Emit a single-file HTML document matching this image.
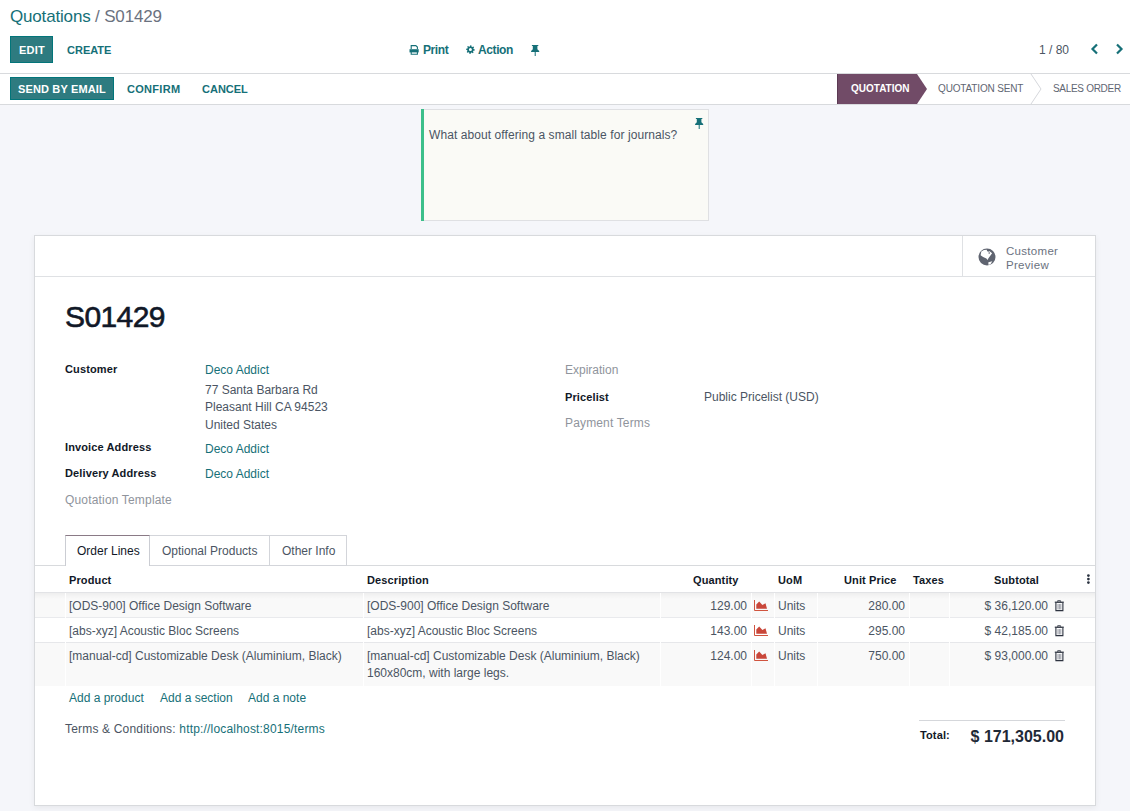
<!DOCTYPE html>
<html><head><meta charset="utf-8"><style>
html,body{margin:0;padding:0;width:1130px;height:811px;overflow:hidden;font-family:"Liberation Sans",sans-serif}
.t{position:absolute;white-space:nowrap}
.r{position:absolute}
</style></head><body>
<div class="r" style="left:0px;top:0px;width:1130px;height:811px;background:#f5f6fa"></div>
<div class="r" style="left:0px;top:0px;width:1130px;height:73px;background:#fff"></div>
<div class="r" style="left:0px;top:73px;width:1130px;height:1px;background:#d8dadd"></div>
<div class="r" style="left:0px;top:74px;width:1130px;height:30px;background:#fff"></div>
<div class="r" style="left:0px;top:104px;width:1130px;height:1px;background:#d8dadd"></div>
<div class="t" style="top:7px;font-size:17px;line-height:19px;color:#4b5563;letter-spacing:-0.17px;left:10px;"><span style="color:#167078">Quotations</span> <span style="color:#6b7280">/ S01429</span></div>
<div class="r" style="left:10px;top:36px;width:43px;height:27px;background:#2e7b80;box-shadow:inset 0 0 0 1px #02757a"></div>
<div class="t" style="top:44px;font-size:11px;line-height:12px;color:#fff;font-weight:700;letter-spacing:0.2px;left:19px;">EDIT</div>
<div class="t" style="top:44px;font-size:11px;line-height:12px;color:#167078;font-weight:700;left:67px;">CREATE</div>
<svg class="r" style="left:409px;top:45px" width="11" height="10" viewBox="0 0 11 10"><path d="M2.2 4V0.6h4.6l1.6 1.5V4" fill="none" stroke="#167078" stroke-width="1.1"/><path d="M0.5 4.2h9.2v3.2H0.5z" fill="#167078"/><path d="M2.2 6.5v2.8h6.2V6.5" fill="none" stroke="#167078" stroke-width="1.1"/></svg>
<div class="t" style="top:43px;font-size:12px;line-height:14px;color:#167078;font-weight:700;letter-spacing:-0.4px;left:423px;">Print</div>
<svg class="r" style="left:466px;top:45px" width="10" height="10" viewBox="0 0 10 10"><path d="M4.40,0.20 L5.26,0.28 L5.62,1.64 L6.18,1.94 L7.51,1.49 L8.06,2.16 L7.36,3.38 L7.54,3.98 L8.80,4.60 L8.72,5.46 L7.36,5.82 L7.06,6.38 L7.51,7.71 L6.84,8.26 L5.62,7.56 L5.02,7.74 L4.40,9.00 L3.54,8.92 L3.18,7.56 L2.62,7.26 L1.29,7.71 L0.74,7.04 L1.44,5.82 L1.26,5.22 L0.00,4.60 L0.08,3.74 L1.44,3.38 L1.74,2.82 L1.29,1.49 L1.96,0.94 L3.18,1.64 L3.78,1.46Z M5.9,4.6 A1.5 1.5 0 1 0 2.9000000000000004,4.6 A1.5 1.5 0 1 0 5.9,4.6Z" fill="#167078" fill-rule="evenodd"/></svg>
<div class="t" style="top:43px;font-size:12px;line-height:14px;color:#167078;font-weight:700;letter-spacing:-0.4px;left:478px;">Action</div>
<svg class="r" style="left:531px;top:45px" width="9" height="11" viewBox="0 0 9 11"><path d="M0.9 0H7.3V1.1H6.4V4.3L8.2 5.9V7H0.1V5.9L1.8 4.3V1.1H0.9Z" fill="#167078"/><rect x="3.7" y="7" width="1" height="4" fill="#167078"/></svg>
<div class="t" style="top:43px;font-size:12px;line-height:14px;color:#4b5563;left:1039px;">1 / 80</div>
<svg class="r" style="left:1090px;top:43px" width="9" height="12" viewBox="0 0 9 12"><path d="M7 1.5L2.5 6L7 10.5" fill="none" stroke="#167078" stroke-width="2.2"/></svg>
<svg class="r" style="left:1115px;top:43px" width="9" height="12" viewBox="0 0 9 12"><path d="M2 1.5L6.5 6L2 10.5" fill="none" stroke="#167078" stroke-width="2.2"/></svg>
<div class="r" style="left:10px;top:77px;width:104px;height:23px;background:#2e7b80;box-shadow:inset 0 0 0 1px #02757a"></div>
<div class="t" style="top:83px;font-size:11px;line-height:12px;color:#fff;font-weight:700;letter-spacing:0.15px;left:18px;">SEND BY EMAIL</div>
<div class="t" style="top:83px;font-size:11px;line-height:12px;color:#167078;font-weight:700;letter-spacing:0.3px;left:127px;">CONFIRM</div>
<div class="t" style="top:83px;font-size:11px;line-height:12px;color:#167078;font-weight:700;left:202px;">CANCEL</div>
<svg class="r" style="left:837px;top:74px" width="293" height="30" viewBox="0 0 293 30"><path d="M0 0H80L90 15L80 30H0z" fill="#714b67"/><rect x="0" y="0" width="1" height="30" fill="#5c3a53"/><path d="M194 0L204 15L194 30" fill="none" stroke="#d5d7dc" stroke-width="1"/></svg>
<div class="t" style="top:83px;font-size:10px;line-height:11px;color:#fff;font-weight:700;left:851px;">QUOTATION</div>
<div class="t" style="top:83px;font-size:10px;line-height:11px;color:#5f6672;letter-spacing:-0.15px;left:938px;">QUOTATION SENT</div>
<div class="t" style="top:83px;font-size:10px;line-height:11px;color:#5f6672;letter-spacing:-0.3px;left:1053px;">SALES ORDER</div>
<div class="r" style="left:421px;top:109px;width:288px;height:112px;background:#fafaf6;border:1px solid #dfe0e3;box-sizing:border-box"></div>
<div class="r" style="left:421px;top:109px;width:3px;height:112px;background:#3cbf8a"></div>
<div class="t" style="top:128px;font-size:12px;line-height:14px;color:#4b5563;letter-spacing:0.08px;left:429px;">What about offering a small table for journals?</div>
<svg class="r" style="left:695px;top:118px" width="9" height="11" viewBox="0 0 9 11"><path d="M0.9 0H7.3V1.1H6.4V4.3L8.2 5.9V7H0.1V5.9L1.8 4.3V1.1H0.9Z" fill="#167078"/><rect x="3.7" y="7" width="1" height="4" fill="#167078"/></svg>
<div class="r" style="left:34px;top:235px;width:1062px;height:571px;background:#fff;border:1px solid #d8dadd;box-sizing:border-box;box-shadow:0 2px 6px rgba(0,0,0,0.06)"></div>
<div class="r" style="left:35px;top:276px;width:1060px;height:1px;background:#dfe1e4"></div>
<div class="r" style="left:962px;top:236px;width:1px;height:40px;background:#dfe1e4"></div>
<svg class="r" style="left:978px;top:248px" width="18" height="19" viewBox="0 0 18 19"><circle cx="9" cy="9.1" r="8.5" fill="#5f6470"/><path d="M2.6 7.2L3.3 3.6L5.9 2L8.8 1.8L9 3.1L10.2 3.7L11.6 3.2L14.1 5.3L12.1 8L10.3 10.4L9.6 12L8.4 10.4L5.1 8.9Z" fill="#fff"/><circle cx="11.2" cy="5" r="0.8" fill="#5f6470"/><path d="M10.4 14.2L14.3 13.2L12.3 16.6L10.4 16.8Z" fill="#fff"/></svg>
<div class="t" style="top:245px;font-size:11.5px;line-height:12px;color:#6b7280;letter-spacing:0.3px;left:1006px;">Customer</div>
<div class="t" style="top:259px;font-size:11.5px;line-height:12px;color:#6b7280;letter-spacing:0.3px;left:1006px;">Preview</div>
<div class="t" style="top:300px;font-size:30px;line-height:33px;color:#111827;letter-spacing:-0.6px;left:65px;-webkit-text-stroke:0.6px #111827;">S01429</div>
<div class="t" style="top:363px;font-size:11px;line-height:12px;color:#111827;font-weight:700;letter-spacing:0.12px;left:65px;">Customer</div>
<div class="t" style="top:363px;font-size:12px;line-height:14px;color:#167078;left:205px;">Deco Addict</div>
<div class="t" style="top:383px;font-size:12px;line-height:14px;color:#4b5563;left:205px;">77 Santa Barbara Rd</div>
<div class="t" style="top:400px;font-size:12px;line-height:14px;color:#4b5563;left:205px;">Pleasant Hill CA 94523</div>
<div class="t" style="top:418px;font-size:12px;line-height:14px;color:#4b5563;left:205px;">United States</div>
<div class="t" style="top:441px;font-size:11px;line-height:12px;color:#111827;font-weight:700;letter-spacing:0.12px;left:65px;">Invoice Address</div>
<div class="t" style="top:442px;font-size:12px;line-height:14px;color:#167078;left:205px;">Deco Addict</div>
<div class="t" style="top:467px;font-size:11px;line-height:12px;color:#111827;font-weight:700;letter-spacing:0.12px;left:65px;">Delivery Address</div>
<div class="t" style="top:467px;font-size:12px;line-height:14px;color:#167078;left:205px;">Deco Addict</div>
<div class="t" style="top:493px;font-size:12px;line-height:14px;color:#8f949c;letter-spacing:0.17px;left:65px;">Quotation Template</div>
<div class="t" style="top:363px;font-size:12px;line-height:14px;color:#8f949c;left:565px;">Expiration</div>
<div class="t" style="top:391px;font-size:11px;line-height:12px;color:#111827;font-weight:700;letter-spacing:0.12px;left:565px;">Pricelist</div>
<div class="t" style="top:390px;font-size:12px;line-height:14px;color:#4b5563;left:704px;">Public Pricelist (USD)</div>
<div class="t" style="top:416px;font-size:12px;line-height:14px;color:#8f949c;letter-spacing:0.15px;left:565px;">Payment Terms</div>
<div class="r" style="left:35px;top:565px;width:1060px;height:1px;background:#d8dadd"></div>
<div class="r" style="left:149px;top:535px;width:121px;height:31px;background:#fff;border:1px solid #d3d5da;box-sizing:border-box"></div>
<div class="r" style="left:269px;top:535px;width:78px;height:31px;background:#fff;border:1px solid #d3d5da;box-sizing:border-box"></div>
<div class="r" style="left:65px;top:535px;width:85px;height:31px;background:#fff;border:1px solid #cbcdd3;border-bottom:none;border-top-color:#8a7a86;box-sizing:border-box"></div>
<div class="t" style="top:544px;font-size:12px;line-height:14px;color:#111827;left:77px;">Order Lines</div>
<div class="t" style="top:544px;font-size:12px;line-height:14px;color:#4b5563;left:162px;">Optional Products</div>
<div class="t" style="top:544px;font-size:12px;line-height:14px;color:#4b5563;left:282px;">Other Info</div>
<div class="t" style="top:574px;font-size:11px;line-height:12px;color:#111827;font-weight:700;letter-spacing:0.12px;left:69px;">Product</div>
<div class="t" style="top:574px;font-size:11px;line-height:12px;color:#111827;font-weight:700;letter-spacing:0.12px;left:367px;">Description</div>
<div class="t" style="top:574px;font-size:11px;line-height:12px;color:#111827;font-weight:700;letter-spacing:0.12px;left:693px;">Quantity</div>
<div class="t" style="top:574px;font-size:11px;line-height:12px;color:#111827;font-weight:700;letter-spacing:0.12px;left:778px;">UoM</div>
<div class="t" style="top:574px;font-size:11px;line-height:12px;color:#111827;font-weight:700;letter-spacing:0.12px;left:844px;">Unit Price</div>
<div class="t" style="top:574px;font-size:11px;line-height:12px;color:#111827;font-weight:700;letter-spacing:0.12px;left:913px;">Taxes</div>
<div class="t" style="top:574px;font-size:11px;line-height:12px;color:#111827;font-weight:700;letter-spacing:0.12px;left:994px;">Subtotal</div>
<svg class="r" style="left:1086px;top:574px" width="5" height="11" viewBox="0 0 5 11"><circle cx="2.4" cy="1.6" r="1.35" fill="#2a3240"/><circle cx="2.4" cy="5.1" r="1.35" fill="#2a3240"/><circle cx="2.4" cy="8.6" r="1.35" fill="#2a3240"/></svg>
<div class="r" style="left:35px;top:592px;width:1060px;height:1px;background:#e2e3e6"></div>
<div class="r" style="left:35px;top:593px;width:1060px;height:25px;background:#f9f9f9"></div>
<div class="r" style="left:35px;top:643px;width:1060px;height:43px;background:#f9f9f9"></div>
<div class="r" style="left:35px;top:593px;width:1060px;height:6px;background:linear-gradient(rgba(0,0,0,0.045),rgba(0,0,0,0))"></div>
<div class="r" style="left:35px;top:617px;width:1060px;height:1px;background:#e9eaed"></div>
<div class="r" style="left:35px;top:642px;width:1060px;height:1px;background:#e6e7ea"></div>
<div class="r" style="left:65px;top:593px;width:1px;height:93px;background:#fff"></div>
<div class="r" style="left:363px;top:593px;width:1px;height:93px;background:#fff"></div>
<div class="r" style="left:660px;top:593px;width:1px;height:93px;background:#fff"></div>
<div class="r" style="left:751px;top:593px;width:1px;height:93px;background:#fff"></div>
<div class="r" style="left:774px;top:593px;width:1px;height:93px;background:#fff"></div>
<div class="r" style="left:817px;top:593px;width:1px;height:93px;background:#fff"></div>
<div class="r" style="left:909px;top:593px;width:1px;height:93px;background:#fff"></div>
<div class="r" style="left:949px;top:593px;width:1px;height:93px;background:#fff"></div>
<div class="t" style="top:599px;font-size:12px;line-height:14px;color:#4b5563;left:69px;">[ODS-900] Office Design Software</div>
<div class="t" style="top:599px;font-size:12px;line-height:14px;color:#4b5563;left:367px;">[ODS-900] Office Design Software</div>
<div class="t" style="top:599px;font-size:12px;line-height:14px;color:#4b5563;right:383px;">129.00</div>
<svg class="r" style="left:754px;top:599px" width="15" height="12" viewBox="0 0 15 12"><path d="M2.3 9.7V5.5L5.2 2.6L8.4 6L11.5 4.2L13 9.7Z" fill="#c9473a"/><path d="M0.5 1V11.5H14" fill="none" stroke="#d0543f" stroke-width="1"/></svg>
<div class="t" style="top:599px;font-size:12px;line-height:14px;color:#4b5563;left:778px;">Units</div>
<div class="t" style="top:599px;font-size:12px;line-height:14px;color:#4b5563;right:225px;">280.00</div>
<div class="t" style="top:599px;font-size:12px;line-height:14px;color:#4b5563;right:82px;">$ 36,120.00</div>
<svg class="r" style="left:1054px;top:600px" width="11" height="12" viewBox="0 0 11 12"><path d="M3.6 1.6V0.8H6.6V1.6" fill="none" stroke="#2d3340" stroke-width="1"/><rect x="0.8" y="1.6" width="9" height="1.3" fill="#2d3340"/><path d="M1.9 2.9V10.6H8.9V2.9" fill="none" stroke="#2d3340" stroke-width="1.1"/><path d="M4 4V9.4M5.4 4V9.4M6.8 4V9.4" stroke="#5a6070" stroke-width="0.6"/></svg>
<div class="t" style="top:624px;font-size:12px;line-height:14px;color:#4b5563;left:69px;">[abs-xyz] Acoustic Bloc Screens</div>
<div class="t" style="top:624px;font-size:12px;line-height:14px;color:#4b5563;left:367px;">[abs-xyz] Acoustic Bloc Screens</div>
<div class="t" style="top:624px;font-size:12px;line-height:14px;color:#4b5563;right:383px;">143.00</div>
<svg class="r" style="left:754px;top:624px" width="15" height="12" viewBox="0 0 15 12"><path d="M2.3 9.7V5.5L5.2 2.6L8.4 6L11.5 4.2L13 9.7Z" fill="#c9473a"/><path d="M0.5 1V11.5H14" fill="none" stroke="#d0543f" stroke-width="1"/></svg>
<div class="t" style="top:624px;font-size:12px;line-height:14px;color:#4b5563;left:778px;">Units</div>
<div class="t" style="top:624px;font-size:12px;line-height:14px;color:#4b5563;right:225px;">295.00</div>
<div class="t" style="top:624px;font-size:12px;line-height:14px;color:#4b5563;right:82px;">$ 42,185.00</div>
<svg class="r" style="left:1054px;top:625px" width="11" height="12" viewBox="0 0 11 12"><path d="M3.6 1.6V0.8H6.6V1.6" fill="none" stroke="#2d3340" stroke-width="1"/><rect x="0.8" y="1.6" width="9" height="1.3" fill="#2d3340"/><path d="M1.9 2.9V10.6H8.9V2.9" fill="none" stroke="#2d3340" stroke-width="1.1"/><path d="M4 4V9.4M5.4 4V9.4M6.8 4V9.4" stroke="#5a6070" stroke-width="0.6"/></svg>
<div class="t" style="top:649px;font-size:12px;line-height:14px;color:#4b5563;left:69px;">[manual-cd] Customizable Desk (Aluminium, Black)</div>
<div class="t" style="top:649px;font-size:12px;line-height:14px;color:#4b5563;left:367px;">[manual-cd] Customizable Desk (Aluminium, Black)</div>
<div class="t" style="top:649px;font-size:12px;line-height:14px;color:#4b5563;right:383px;">124.00</div>
<svg class="r" style="left:754px;top:649px" width="15" height="12" viewBox="0 0 15 12"><path d="M2.3 9.7V5.5L5.2 2.6L8.4 6L11.5 4.2L13 9.7Z" fill="#c9473a"/><path d="M0.5 1V11.5H14" fill="none" stroke="#d0543f" stroke-width="1"/></svg>
<div class="t" style="top:649px;font-size:12px;line-height:14px;color:#4b5563;left:778px;">Units</div>
<div class="t" style="top:649px;font-size:12px;line-height:14px;color:#4b5563;right:225px;">750.00</div>
<div class="t" style="top:649px;font-size:12px;line-height:14px;color:#4b5563;right:82px;">$ 93,000.00</div>
<svg class="r" style="left:1054px;top:650px" width="11" height="12" viewBox="0 0 11 12"><path d="M3.6 1.6V0.8H6.6V1.6" fill="none" stroke="#2d3340" stroke-width="1"/><rect x="0.8" y="1.6" width="9" height="1.3" fill="#2d3340"/><path d="M1.9 2.9V10.6H8.9V2.9" fill="none" stroke="#2d3340" stroke-width="1.1"/><path d="M4 4V9.4M5.4 4V9.4M6.8 4V9.4" stroke="#5a6070" stroke-width="0.6"/></svg>
<div class="t" style="top:666px;font-size:12px;line-height:14px;color:#4b5563;left:367px;">160x80cm, with large legs.</div>
<div class="t" style="top:691px;font-size:12px;line-height:14px;color:#167078;left:69px;">Add a product</div>
<div class="t" style="top:691px;font-size:12px;line-height:14px;color:#167078;left:160px;">Add a section</div>
<div class="t" style="top:691px;font-size:12px;line-height:14px;color:#167078;left:248px;">Add a note</div>
<div class="t" style="top:722px;font-size:12px;line-height:14px;color:#4b5563;letter-spacing:0.18px;left:65px;">Terms &amp; Conditions: <span style="color:#167078">http://localhost:8015/terms</span></div>
<div class="r" style="left:919px;top:720px;width:146px;height:1px;background:#d5d7db"></div>
<div class="t" style="top:729px;font-size:11px;line-height:12px;color:#111827;font-weight:700;letter-spacing:0.12px;left:920px;">Total:</div>
<div class="t" style="top:728px;font-size:16px;line-height:17px;color:#1f2937;font-weight:700;right:66px;">$ 171,305.00</div>
</body></html>
